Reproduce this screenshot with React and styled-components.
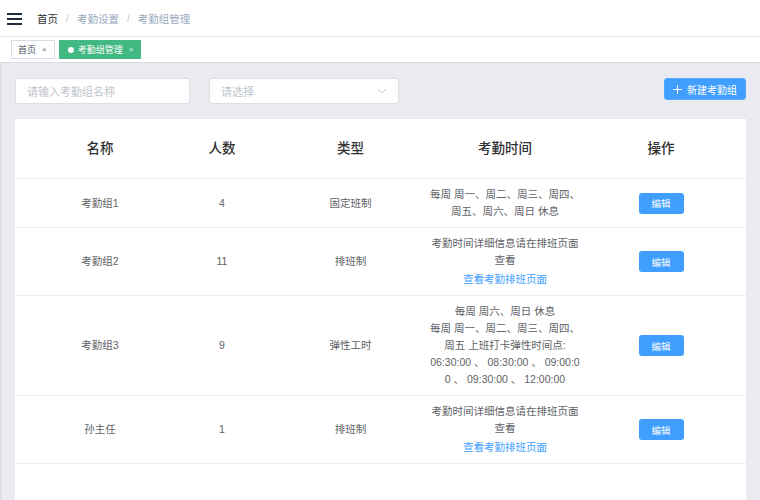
import React from 'react'
import styled, { createGlobalStyle } from 'styled-components'

const color = {
	text: '#606266',
	title: '#303133',
	grey: '#97a8be',
	blue: '#409eff',
	green: '#42b983',
	line: '#ebeef5',
	bg: '#eaebf0',
	holder: '#c0c4cc',
}

const font = `"Liberation Sans", "Noto Sans CJK SC", sans-serif`

const Global = createGlobalStyle`
	html, body {
		margin: 0;
		padding: 0;
		background: #fff;
		font-family: ${ font };
		overflow: hidden;
	}
	* { box-sizing: border-box; }
`

const Navbar = styled.div`
	height: 37px;
	display: flex;
	align-items: center;
	padding-left: 7px;
	border-bottom: 1px solid #e6e6e6;
	background: #fff;
`
const Burger = styled.svg`
	width: 15px;
	height: 12px;
	margin-right: 15px;
	margin-top: 1px;
`
const Crumbs = styled.div`
	display: flex;
	align-items: center;
	font-size: 10.5px;
	color: ${ color.grey };
`
const Crumb = styled.span`
	color: ${ p => p.$active ? color.title : color.grey };
`
const Slash = styled.span`
	margin: 0 8px;
	color: #c0c4cc;
`
const TagBar = styled.div`
	height: 26px;
	display: flex;
	align-items: center;
	gap: 4px;
	padding-left: 11px;
	border-bottom: 1px solid #d8dce5;
	box-shadow: 0 1px 2px rgba(0, 0, 0, 0.06);
	background: #fff;
`
const Tag = styled.div`
	height: 19px;
	display: flex;
	align-items: center;
	padding: 0 7px 0 ${ p => p.$active ? '8px' : '6px' };
	font-size: 9px;
	border: 1px solid ${ p => p.$active ? color.green : '#d8dce5' };
	background: ${ p => p.$active ? color.green : '#fff' };
	color: ${ p => p.$active ? '#fff' : '#495060' };
`
const Dot = styled.span`
	width: 6px;
	height: 6px;
	border-radius: 50%;
	background: #fff;
	margin-right: 4px;
`
const Close = styled.span`
	font-size: 8px;
	margin-left: 6px;
	opacity: 0.8;
`
const Main = styled.div`
	background: ${ color.bg };
	border-left: 2px solid #dedfe4;
	padding: 15px 14px 0 13px;
	min-height: 440px;
`
const Filters = styled.div`
	display: flex;
	align-items: flex-start;
	gap: 19px;
	margin-bottom: 15px;
`
const Field = styled.div`
	width: ${ p => p.$w }px;
	height: 26px;
	display: flex;
	align-items: center;
	justify-content: space-between;
	padding: 0 11px;
	background: #fff;
	border: 1px solid #dcdfe6;
	border-radius: 3px;
	font-size: 11px;
	color: ${ color.holder };
`
const AddButton = styled.button`
	margin-left: auto;
	height: 22px;
	width: 82px;
	display: flex;
	align-items: center;
	justify-content: center;
	gap: 5px;
	border: 1px solid #57a9ff;
	border-radius: 3px;
	background: ${ color.blue };
	color: #fff;
	font-family: ${ font };
	font-size: 10px;
	padding: 0;
`
const Card = styled.div`
	background: #fff;
	padding-bottom: 40px;
`
const Row = styled.div`
	display: grid;
	grid-template-columns: 170px 74px 161px 170px 1fr;
	border-bottom: 1px solid ${ color.line };
	min-height: ${ p => p.$head ? '60px' : 'auto' };
`
const Cell = styled.div`
	display: flex;
	flex-direction: column;
	align-items: center;
	justify-content: center;
	text-align: center;
	padding: 7px ${ p => p.$pr || 10 }px 7px ${ p => p.$pl || 10 }px;
	font-size: ${ p => p.$head ? '13.5px' : '10.5px' };
	font-weight: ${ p => p.$head ? 500 : 400 };
	line-height: 17px;
	color: ${ p => p.$head ? color.title : color.text };
`
const Times = styled.div`
	width: 152px;
	word-break: break-all;
`
const Link = styled.a`
	display: block;
	padding-top: 2px;
	color: ${ color.blue };
	text-decoration: none;
`
const EditButton = styled.button`
	width: 45px;
	height: 21px;
	border: none;
	border-radius: 3px;
	background: ${ color.blue };
	color: #fff;
	font-family: ${ font };
	font-size: 9.5px;
	padding: 0;
`

const cols = [
	{},
	{},
	{ pl: 32 },
	{ pl: 10, pr: 10 },
	{ pr: 24 },
]

const groups = [
	{ name: '考勤组1', count: 4, type: '固定班制', time: ['每周 周一、周二、周三、周四、周五、周六、周日 休息'] },
	{ name: '考勤组2', count: 11, type: '排班制', time: ['考勤时间详细信息请在排班页面查看'], link: true },
	{
		name: '考勤组3',
		count: 9,
		type: '弹性工时',
		time: [
			'每周 周六、周日 休息',
			'每周 周一、周二、周三、周四、周五 上班打卡弹性时间点:',
			'06:30:00 、 08:30:00 、 09:00:00 、 09:30:00 、 12:00:00',
		],
	},
	{ name: '孙主任', count: 1, type: '排班制', time: ['考勤时间详细信息请在排班页面查看'], link: true },
]

const heads = ['名称', '人数', '类型', '考勤时间', '操作']

const App = () => {
	return (
		<>
			<Global />
			<Navbar>
				<Burger viewBox="0 0 15 12">
					<rect x="0" y="0" width="15" height="2" fill="#1f2d3d" />
					<rect x="0" y="5" width="15" height="2" fill="#1f2d3d" />
					<rect x="0" y="10" width="15" height="2" fill="#1f2d3d" />
				</Burger>
				<Crumbs>
					<Crumb $active>首页</Crumb>
					<Slash>/</Slash>
					<Crumb>考勤设置</Crumb>
					<Slash>/</Slash>
					<Crumb>考勤组管理</Crumb>
				</Crumbs>
			</Navbar>
			<TagBar>
				<Tag>首页<Close>×</Close></Tag>
				<Tag $active><Dot />考勤组管理<Close>×</Close></Tag>
			</TagBar>
			<Main>
				<Filters>
					<Field $w={ 175 }>请输入考勤组名称</Field>
					<Field $w={ 190 }>
						请选择
						<svg width="10" height="6" viewBox="0 0 10 6">
							<polyline points="1,1 5,5 9,1" fill="none" stroke="#c0c4cc" strokeWidth="1" />
						</svg>
					</Field>
					<AddButton>
						<svg width="9" height="9" viewBox="0 0 9 9">
							<path d="M4.5 0v9M0 4.5h9" stroke="#fff" strokeWidth="1" />
						</svg>
						新建考勤组
					</AddButton>
				</Filters>
				<Card>
					<Row $head>
						{ heads.map((h, i) => (
							<Cell key={ h } $head $pl={ cols[i].pl } $pr={ cols[i].pr }>{ h }</Cell>
						)) }
					</Row>
					{ groups.map(g => (
						<Row key={ g.name }>
							<Cell>{ g.name }</Cell>
							<Cell>{ g.count }</Cell>
							<Cell $pl={ cols[2].pl }>{ g.type }</Cell>
							<Cell>
								{ g.time.map(t => <Times key={ t }>{ t }</Times>) }
								{ g.link && <Link href="#">查看考勤排班页面</Link> }
							</Cell>
							<Cell $pr={ cols[4].pr }><EditButton>编辑</EditButton></Cell>
						</Row>
					)) }
				</Card>
			</Main>
		</>
	)
}

export default App
